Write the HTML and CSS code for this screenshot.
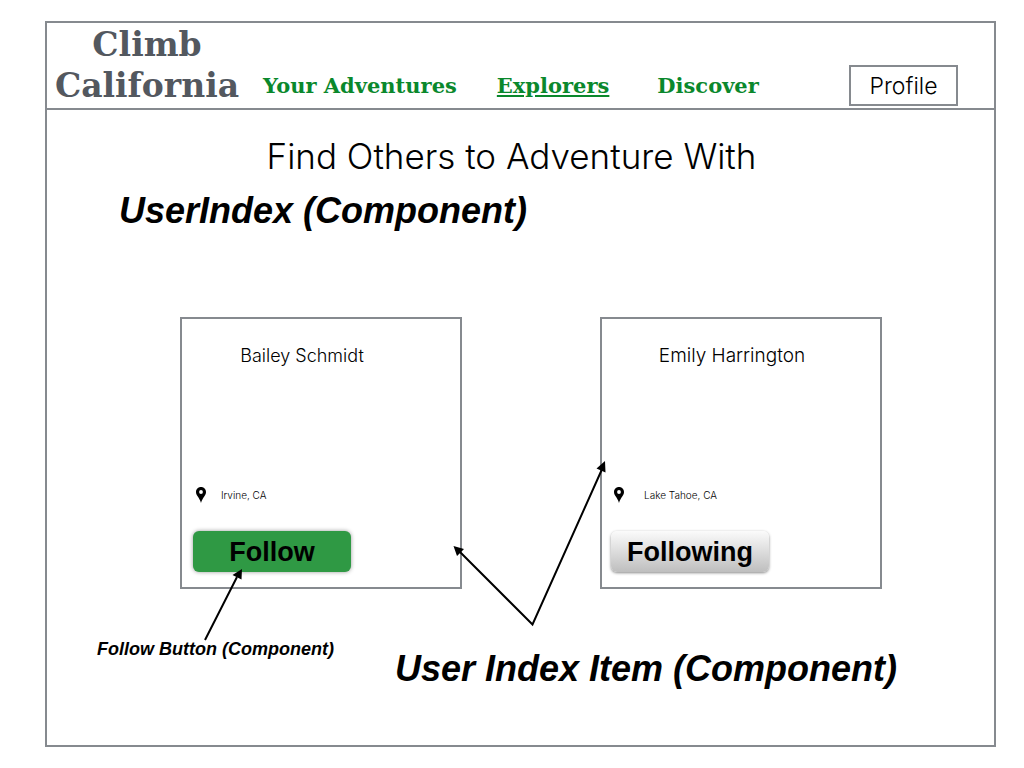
FILE: index.html
```html
<!DOCTYPE html>
<html lang="en">
<head>
<meta charset="utf-8">
<meta name="viewport" content="width=device-width, initial-scale=1">
<title>Climb California</title>
<link rel="stylesheet" href="styles.css">
</head>
<body>
<div class="frame">
  <header class="header">
    <div class="brand">Climb California</div>
    <nav class="nav">
      <a class="nav-link" href="#adventures">Your Adventures</a>
      <a class="nav-link current" href="#explorers">Explorers</a>
      <a class="nav-link nav-last" href="#discover">Discover</a>
    </nav>
    <button class="profile" type="button">Profile</button>
  </header>
  <main class="main">
    <h1 class="title">Find Others to Adventure With</h1>
    <h2 class="note note-index">UserIndex (Component)</h2>
    <section class="gallery">
      <article class="card">
        <h3 class="name">Bailey Schmidt</h3>
        <p class="place">
          <svg class="pin" viewBox="0 0 10 16" aria-hidden="true"><path fill-rule="evenodd" d="M5 0C2.100 0 0 2.200 0 5c0 1.700.7 2.900 1.600 4.300C3 11.500 4.300 13.200 5 16c.7-2.800 2-4.500 3.400-6.700C9.300 7.900 10 6.700 10 5c0-2.800-2.100-5-5-5zm0 3.100a1.900 1.900 0 1 1 0 3.800 1.900 1.900 0 0 1 0-3.800z"/></svg>
          <span>Irvine, CA</span>
        </p>
        <button class="action follow" type="button">Follow</button>
      </article>
      <article class="card card-followed">
        <h3 class="name">Emily Harrington</h3>
        <p class="place">
          <svg class="pin" viewBox="0 0 10 16" aria-hidden="true"><path fill-rule="evenodd" d="M5 0C2.100 0 0 2.200 0 5c0 1.700.7 2.900 1.600 4.300C3 11.500 4.300 13.200 5 16c.7-2.800 2-4.500 3.400-6.700C9.300 7.900 10 6.700 10 5c0-2.800-2.100-5-5-5zm0 3.100a1.900 1.900 0 1 1 0 3.800 1.900 1.900 0 0 1 0-3.800z"/></svg>
          <span>Lake Tahoe, CA</span>
        </p>
        <button class="action following" type="button">Following</button>
      </article>
    </section>
    <div class="notes">
      <p class="note note-button">Follow Button (Component)</p>
      <p class="note note-item">User Index Item (Component)</p>
    </div>
    <svg class="arrows" viewBox="47 110 947 600" aria-hidden="true">
      <path class="line" d="M205 640 237 577M603 467 532.500 624.500 459 551"/>
      <path d="M242 569 241.500 579.500 232.500 575zM605 461 605.500 472.500 596.500 468.500zM453.500 546 464 549 457 556z"/>
    </svg>
  </main>
</div>
</body>
</html>
```
FILE: styles.css
```css
* {
  box-sizing: border-box;
}

body {
  margin: 0;
  padding: 21px 28px 21px 45px;
  min-height: 100vh;
  display: flex;
  background: #fff;
  color: #000;
  font-family: Inter, sans-serif;
  font-weight: 300;
}

h1, h2, h3, p {
  margin: 0;
}

button {
  padding: 0;
  color: inherit;
  cursor: pointer;
}

.frame {
  flex: 1;
  border: 2px solid #868a8f;
}

.header {
  display: flex;
  align-items: flex-end;
  padding: 1px 36px 2px 6px;
  border-bottom: 2px solid #868a8f;
}

.brand {
  width: 188px;
  color: #53585f;
  font: bold 33px/41px "DejaVu Serif", serif;
  text-align: center;
}

.nav {
  display: flex;
  flex: 1;
  gap: 40px;
  padding: 0 0 6px 22px;
}

.nav-link {
  color: #0a882c;
  font: bold 21px/28px "DejaVu Serif", serif;
  text-decoration: none;
  white-space: nowrap;
}

.nav-link.current {
  text-decoration: underline;
}

.nav-last {
  margin-left: 8px;
}

.profile {
  width: 109px;
  height: 41px;
  border: 2px solid #868a8f;
  background: #fff;
  font: 300 23px/28px Inter, sans-serif;
}

.main {
  position: relative;
  padding-top: 24px;
}

.title {
  padding-right: 18px;
  font-size: 35px;
  font-weight: 300;
  line-height: 44px;
  text-align: center;
}

.note {
  font: italic bold 36px/44px "Liberation Sans", sans-serif;
  white-space: nowrap;
}

.note-index {
  margin-top: 11px;
  padding-left: 72px;
}

.gallery {
  display: grid;
  grid-template-columns: repeat(2, minmax(0, 282px));
  gap: 138px;
  margin-top: 84px;
  padding-left: 133px;
}

.card {
  padding: 25px 11px 15px;
  border: 2px solid #868a8f;
}

.name {
  padding-right: 38px;
  font-size: 18px;
  font-weight: 300;
  line-height: 24px;
  text-align: center;
}

.place {
  display: flex;
  align-items: center;
  gap: 15px;
  margin-top: 119px;
  padding-left: 3px;
  font-size: 10px;
  line-height: 16px;
}

.pin {
  width: 10px;
  height: 16px;
}

.action {
  display: block;
  width: 158px;
  height: 41px;
  margin-top: 28px;
  border: 0;
  border-radius: 6px;
  font: bold 27px/32px "Liberation Sans", sans-serif;
}

.follow {
  background: #2f9944;
  box-shadow: 0 0 4px #0006;
}

.following {
  background: linear-gradient(#fbfbfb, #bebebe);
  box-shadow: 0 1px 3px #0007;
}

.card-followed {
  padding-left: 9px;
}

.card-followed .name {
  padding-right: 16px;
  font-size: 19px;
}

.card-followed .place {
  gap: 20px;
}

.notes {
  display: flex;
  gap: 61px;
  padding: 48px 0 0 50px;
}

.note-button {
  font-size: 18px;
  line-height: 24px;
}

.note-item {
  margin-top: 10px;
}

.arrows {
  position: absolute;
  top: 0;
  left: 0;
  width: 947px;
  height: 600px;
  pointer-events: none;
}

.line {
  fill: none;
  stroke: #000;
  stroke-width: 2;
}
```
